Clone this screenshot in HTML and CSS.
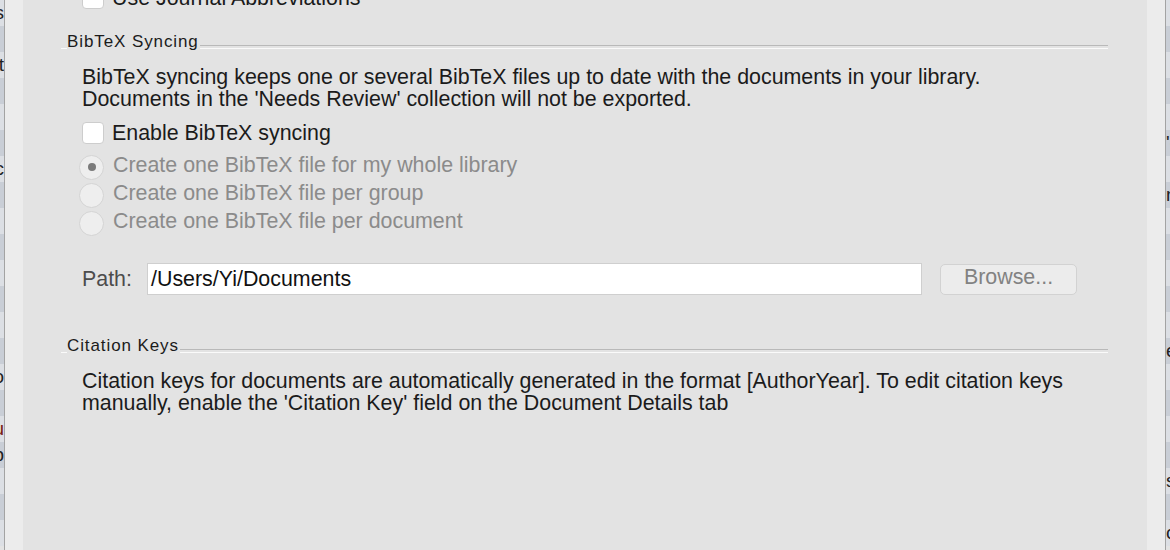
FILE: index.html
```html
<!DOCTYPE html>
<html lang="en">
<head>
  <meta charset="UTF-8" />
  <title>Preferences - BibTeX</title>
  <link rel="stylesheet" href="styles.css">
</head>
<body>
  <div class="screen">
    <!-- window behind the sheet, left -->
    <div class="behind behind-left">
      <div class="row">s</div>
      <div class="row"></div>
      <div class="row">t</div>
      <div class="row"></div>
      <div class="row"></div>
      <div class="row"></div>
      <div class="row">c</div>
      <div class="row"></div>
      <div class="row"></div>
      <div class="row"></div>
      <div class="row"></div>
      <div class="row"></div>
      <div class="row"></div>
      <div class="row"></div>
      <div class="row">o</div>
      <div class="row"></div>
      <div class="row red">u</div>
      <div class="row">b</div>
      <div class="row"></div>
      <div class="row"></div>
      <div class="row"></div>
    </div>
    <div class="frame-edge"></div>

    <main class="pane">
      <div class="check-row top-row">
        <span class="checkbox"></span>
        <span class="label">Use Journal Abbreviations</span>
      </div>

      <div class="group-title"><span>BibTeX Syncing</span></div>
      <p class="desc">BibTeX syncing keeps one or several BibTeX files up to date with the documents in your library.<br>Documents in the 'Needs Review' collection will not be exported.</p>

      <div class="check-row enable-row">
        <span class="checkbox"></span>
        <span class="label">Enable BibTeX syncing</span>
      </div>

      <div class="radios">
        <div class="radio-row"><span class="radio on"></span><span>Create one BibTeX file for my whole library</span></div>
        <div class="radio-row"><span class="radio"></span><span>Create one BibTeX file per group</span></div>
        <div class="radio-row"><span class="radio"></span><span>Create one BibTeX file per document</span></div>
      </div>

      <div class="path-row">
        <span class="path-label">Path:</span>
        <div class="path-field">/Users/Yi/Documents</div>
        <button class="browse" disabled>Browse...</button>
      </div>

      <div class="group-title cite-title"><span>Citation Keys</span></div>
      <p class="desc">Citation keys for documents are automatically generated in the format [AuthorYear]. To edit citation keys<br>manually, enable the 'Citation Key' field on the Document Details tab</p>
    </main>

    <div class="frame-edge"></div>
    <!-- window behind the sheet, right -->
    <div class="behind behind-right">
      <div class="row"></div>
      <div class="row"></div>
      <div class="row"></div>
      <div class="row"></div>
      <div class="row"></div>
      <div class="row">'e</div>
      <div class="row"></div>
      <div class="row">ne</div>
      <div class="row"></div>
      <div class="row"></div>
      <div class="row"></div>
      <div class="row"></div>
      <div class="row"></div>
      <div class="row">e</div>
      <div class="row"></div>
      <div class="row"></div>
      <div class="row"></div>
      <div class="row"></div>
      <div class="row">s</div>
      <div class="row"></div>
      <div class="row">c</div>
    </div>
  </div>
</body>
</html>
```

FILE: styles.css
```css
/* BASE */
* { box-sizing: border-box; }
html, body {
  margin: 0; padding: 0;
  height: 100%;
  overflow: hidden;
}
body {
  font-family: 'Liberation Sans', Arial, sans-serif;
  color: #1b1b1b;
  background: #e3e3e3;
}
p { margin: 0; }

/* WINDOW FRAME */
.screen {
  display: flex;
  height: 550px;
}
.behind {
  width: 5px;
  overflow: hidden;
  display: flex; flex-direction: column;
  font-size: 19px;
  color: #222;
}
.behind-left { border-right: 1px solid #a3a3a3; }
.behind-right { border-left: 1px solid #a3a3a3; }
.behind .row {
  flex: 0 0 26px;
  line-height: 26px;
  white-space: nowrap;
  background: #dcdfe4;
}
.behind .row:nth-child(even) { background: #c9ced6; }
.behind-left .row { direction: rtl; text-align: right; }
.behind .row.red { color: #7a1a10; }
.frame-edge {
  width: 18px;
  background: #ececec;
}
.pane {
  flex: 1;
  background: #e3e3e3;
  padding: 0 39px 0 38px;
  overflow: hidden;
  font-size: 21.4px;
}

/* CHECKBOXES */
.check-row {
  display: flex; align-items: center;
  height: 22px;
  padding-left: 21px;
  line-height: 22px;
}
.checkbox {
  width: 22px; height: 22px;
  background: #fff;
  border: 1px solid #cdcdcd;
  border-radius: 4px;
  margin-right: 8px;
  flex: none;
}
.top-row { margin-top: -13px; }
.enable-row { margin-top: 12px; }

/* GROUP TITLES */
.group-title {
  display: flex; align-items: flex-end;
  height: 20px;
  margin-top: 23px;
  font-size: 17px;
  line-height: 20px;
  letter-spacing: 0.9px;
}
.group-title::before,
.group-title::after {
  content: '';
  height: 2px;
  margin-bottom: 3px;
  border-top: 1px solid #b9b9b9;
  border-bottom: 1px solid #fafafa;
}
.group-title::before { width: 6px; border-top-color: transparent; }
.group-title::after { flex: 1; margin-left: 1px; }
.group-title span { flex: none; }
.cite-title { margin-top: 41px; }

.desc {
  margin-top: 14px;
  padding-left: 21px;
  line-height: 22px;
}

/* RADIOS */
.radios {
  margin-top: 7px;
  padding-left: 18px;
}
.radio-row {
  display: flex; align-items: center;
  height: 28px;
  line-height: 28px;
  color: #8b8b8b;
}
.radio {
  width: 25px; height: 25px;
  margin: 4px 9px 0 0;
  border-radius: 50%;
  background: #eeeeee;
  border: 1px solid #d4d4d4;
  display: flex; align-items: center; justify-content: center;
  flex: none;
}
.radio.on::after {
  content: '';
  width: 8px; height: 8px;
  border-radius: 50%;
  background: #7b7b7b;
}

/* PATH ROW */
.path-row {
  display: flex; align-items: center;
  height: 32px;
  margin-top: 28px;
  padding: 0 31px 0 21px;
}
.path-label {
  width: 65px;
  color: #4c4c4c;
}
.path-field {
  flex: 1;
  height: 32px;
  line-height: 30px;
  padding-left: 3px;
  background: #fff;
  border: 1px solid #cfcfcf;
  color: #111;
}
.browse {
  width: 137px; height: 31px;
  margin-left: 18px;
  padding: 0 0 4px;
  font: inherit;
  color: #828282;
  background: #ececec;
  border: 1px solid #d2d2d2;
  border-radius: 5px;
}
```
